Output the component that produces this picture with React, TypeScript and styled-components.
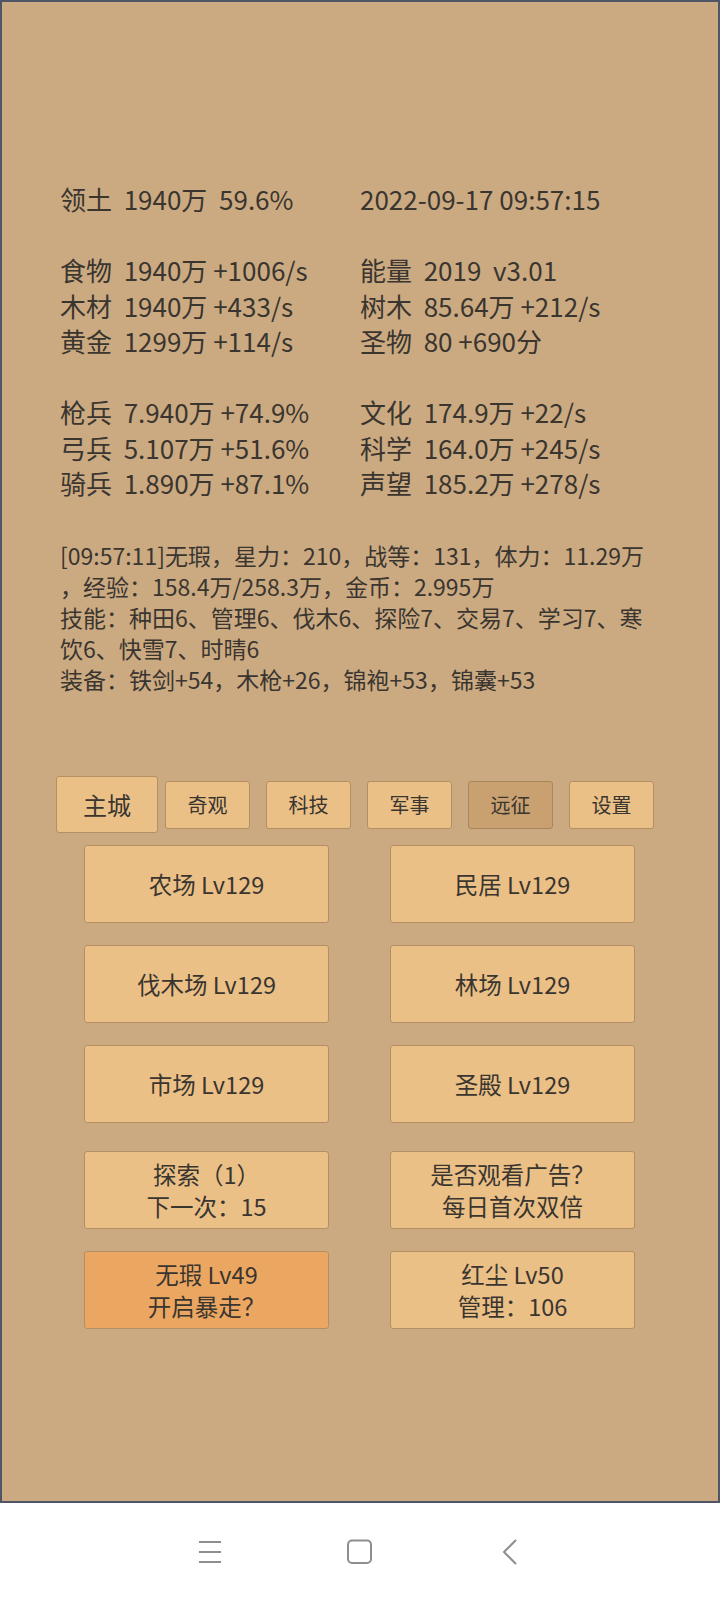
import styled, { createGlobalStyle } from 'styled-components'

const GlobalStyle = createGlobalStyle`
	html, body {
		margin: 0;
		padding: 0;
		background: #ffffff;
	}
	body {
		font-family: "Noto Sans CJK SC", Roboto, sans-serif;
	}
`

const Screen = styled.div`
	width: 720px;
	height: 1600px;
	display: flex;
	flex-direction: column;
`
const Panel = styled.main`
	height: 1503px;
	box-sizing: border-box;
	border: 2px solid #4f5564;
	background: #cbaa82;
	color: #3a352f;
	padding-top: 179px;
	display: flex;
	flex-direction: column;
`
const StatGroup = styled.div`
	display: grid;
	grid-template-columns: 300px 1fr;
	padding-left: 58px;
	font-size: 26px;
	line-height: 35.5px;
	white-space: pre;
	margin-bottom: 35.5px;
`
const Log = styled.div`
	padding-left: 58px;
	margin-top: 4px;
	font-size: 23px;
	line-height: 31px;
	white-space: pre;
`
const TabBar = styled.nav`
	display: flex;
	align-items: center;
	gap: 16px;
	margin-top: 81px;
	padding-left: 54px;
	height: 57px;
`
const Tab = styled.button<{ $main?: boolean; $pressed?: boolean }>`
	box-sizing: border-box;
	width: ${(p) => (p.$main ? '102px' : '85px')};
	height: ${(p) => (p.$main ? '57px' : '48px')};
	margin-right: ${(p) => (p.$main ? '-9px' : '0')};
	background: ${(p) => (p.$pressed ? '#c9a171' : '#eac087')};
	border: 1.5px solid ${(p) => (p.$pressed ? '#a8865c' : '#b38f63')};
	border-radius: 3px;
	padding: 0;
	font-family: inherit;
	font-size: ${(p) => (p.$main ? '24px' : '20px')};
	color: #3a352f;
`
const ButtonGrid = styled.div<{ $gapTop: number }>`
	display: grid;
	grid-template-columns: 245px 245px;
	column-gap: 61px;
	row-gap: 22px;
	padding-left: 82px;
	margin-top: ${(p) => p.$gapTop}px;
`
const Building = styled.button<{ $hot?: boolean }>`
	box-sizing: border-box;
	height: 78px;
	background: ${(p) => (p.$hot ? '#eba762' : '#eac087')};
	border: 1.5px solid #b38f63;
	border-radius: 3px;
	padding: 0;
	font-family: inherit;
	font-size: 23.5px;
	line-height: 32px;
	color: #3a352f;
	display: flex;
	flex-direction: column;
	align-items: center;
	justify-content: center;
	white-space: pre;
`
const NavBar = styled.div`
	flex: 1;
	display: grid;
	grid-template-columns: repeat(3, 150px);
	justify-content: center;
	align-items: center;
	justify-items: center;
	color: #8e8e8e;
`

type Stat = [string, string]

const groups: { left: Stat[]; right: Stat[] }[] = [
	{
		left: [['领土', '1940万  59.6%']],
		right: [['', '2022-09-17 09:57:15']],
	},
	{
		left: [
			['食物', '1940万 +1006/s'],
			['木材', '1940万 +433/s'],
			['黄金', '1299万 +114/s'],
		],
		right: [
			['能量', '2019  v3.01'],
			['树木', '85.64万 +212/s'],
			['圣物', '80 +690分'],
		],
	},
	{
		left: [
			['枪兵', '7.940万 +74.9%'],
			['弓兵', '5.107万 +51.6%'],
			['骑兵', '1.890万 +87.1%'],
		],
		right: [
			['文化', '174.9万 +22/s'],
			['科学', '164.0万 +245/s'],
			['声望', '185.2万 +278/s'],
		],
	},
]

const logLines = [
	'[09:57:11]无瑕，星力：210，战等：131，体力：11.29万',
	'，经验：158.4万/258.3万，金币：2.995万',
	'技能：种田6、管理6、伐木6、探险7、交易7、学习7、寒',
	'饮6、快雪7、时晴6',
	'装备：铁剑+54，木枪+26，锦袍+53，锦囊+53',
]

const tabs = ['奇观', '科技', '军事', '远征', '设置']
const buildings = ['农场', '民居', '伐木场', '林场', '市场', '圣殿']

const fmt = ([label, value]: Stat) => (label ? `${label}  ${value}` : value)

const App = () => {
	return (
		<Screen>
			<GlobalStyle />
			<Panel>
				{groups.map((g, i) => (
					<StatGroup key={i}>
						{g.left.map((s, j) => [
							<span key={'l' + j}>{fmt(s)}</span>,
							<span key={'r' + j}>{fmt(g.right[j])}</span>,
						])}
					</StatGroup>
				))}
				<Log>
					{logLines.map((line) => (
						<div key={line}>{line}</div>
					))}
				</Log>
				<TabBar>
					<Tab $main>主城</Tab>
					{tabs.map((t) => (
						<Tab key={t} $pressed={t === '远征'}>
							{t}
						</Tab>
					))}
				</TabBar>
				<ButtonGrid $gapTop={12}>
					{buildings.map((b) => (
						<Building key={b}>{b} Lv129</Building>
					))}
				</ButtonGrid>
				<ButtonGrid $gapTop={28}>
					<Building>
						<span>探索（1）</span>
						<span>下一次：15</span>
					</Building>
					<Building>
						<span>是否观看广告？</span>
						<span>每日首次双倍</span>
					</Building>
					<Building $hot>
						<span>无瑕 Lv49</span>
						<span>开启暴走？</span>
					</Building>
					<Building>
						<span>红尘 Lv50</span>
						<span>管理：106</span>
					</Building>
				</ButtonGrid>
			</Panel>
			<NavBar>
				<svg width='24' height='22' viewBox='0 0 24 22'>
					<path d='M1 1H23M1 11H23M1 21H23' stroke='currentColor' strokeWidth='2' />
				</svg>
				<svg width='26' height='26' viewBox='0 0 26 26'>
					<rect x='1' y='1.5' width='23' height='22.5' rx='4' fill='none' stroke='currentColor' strokeWidth='2' />
				</svg>
				<svg width='16' height='26' viewBox='0 0 16 26'>
					<path d='M14 1L2 13L14 25' fill='none' stroke='currentColor' strokeWidth='2' />
				</svg>
			</NavBar>
		</Screen>
	)
}

export default App
